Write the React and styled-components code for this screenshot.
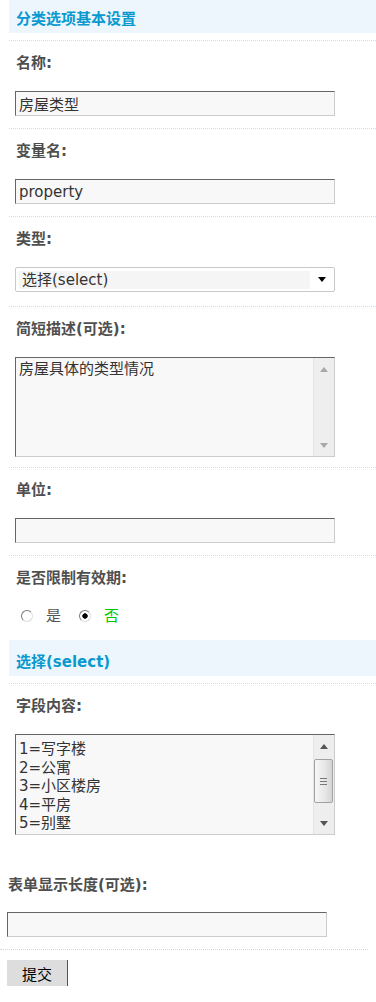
import React, { useState } from "react";
import styled, { createGlobalStyle } from "styled-components";

const GlobalStyle = createGlobalStyle`
  html, body {
    margin: 0;
    padding: 0;
    background: #fff;
  }
  body {
    font-family: "DejaVu Sans", "Noto Sans CJK SC", sans-serif;
    font-size: 15px;
    color: #333;
  }
`;

const FONT = `"DejaVu Sans", "Noto Sans CJK SC", sans-serif`;

const Page = styled.div`
  width: 376px;
  padding-bottom: 14px;
`;

const Form = styled.form`
  margin-left: 9px;
`;

const HeaderWrap = styled.div`
  padding-bottom: 7px;
  border-bottom: 1px dotted #c9dff0;
`;

const HeaderBar = styled.h3`
  margin: 0;
  padding: ${(p) => p.$top}px 7px 4px;
  background: #eef6fd;
  color: #0a99cf;
  font-size: 15px;
  font-weight: bold;
  line-height: 20px;
`;

const Row = styled.div`
  padding: 12px 6px ${(p) => (p.$pb != null ? p.$pb : 12)}px;
  border-bottom: ${(p) => (p.$noBorder ? "none" : "1px dotted #c9dff0")};
`;

const Label = styled.div`
  font-size: 15px;
  font-weight: bold;
  line-height: 20px;
  color: #4f4f4f;
  padding-left: 1px;
  margin-bottom: ${(p) => (p.$mb != null ? p.$mb : 18)}px;
`;

const TextInput = styled.input`
  display: block;
  box-sizing: border-box;
  width: 320px;
  height: 25px;
  margin: 0;
  padding: 0 3px;
  border: 1px solid;
  border-color: #666 #ccc #ccc #666;
  background: #f8f8f8;
  font-family: ${FONT};
  font-size: 15px;
  color: #333;
  outline: none;
`;

const SelectFrame = styled.div`
  box-sizing: border-box;
  width: 320px;
  height: 25px;
  display: flex;
  align-items: center;
  padding: 0 0 0 3px;
  border: 1px solid #c9c9c9;
  border-radius: 2px;
  background: #fff;
`;

const SelectValue = styled.select`
  appearance: none;
  -webkit-appearance: none;
  width: 291px;
  height: 18px;
  margin: 0;
  padding: 0 0 0 3px;
  border: none;
  border-radius: 0;
  background: #f5f5f5;
  font-family: ${FONT};
  font-size: 15px;
  line-height: 18px;
  color: #333;
  outline: none;
`;

const SelectArrow = styled.span`
  flex: 1;
  display: flex;
  justify-content: center;
  align-items: center;
`;

const TextFrame = styled.div`
  box-sizing: border-box;
  width: 320px;
  height: ${(p) => p.$h}px;
  display: flex;
  border: 1px solid;
  border-color: #666 #ccc #ccc #666;
  background: #f8f8f8;
`;

const TextArea = styled.textarea`
  flex: 1;
  margin: 0;
  padding: ${(p) => p.$pt}px 3px 0;
  border: none;
  background: transparent;
  resize: none;
  overflow: hidden;
  font-family: ${FONT};
  font-size: 15px;
  line-height: 18.5px;
  color: #333;
  outline: none;
`;

const ScrollTrack = styled.div`
  width: 20px;
  display: flex;
  flex-direction: column;
  background: #eeeeee;
  border-left: 1px solid #e4e4e4;
`;

const ArrowCell = styled.div`
  height: 22px;
  display: flex;
  justify-content: center;
  align-items: center;
`;

const Thumb = styled.div`
  box-sizing: border-box;
  height: 44px;
  margin: 2px 1px 0 0;
  border: 1px solid #a2a2a2;
  border-radius: 2px;
  background: linear-gradient(to right, #f6f6f6, #e6e6e6 60%, #d4d4d4);
  display: flex;
  flex-direction: column;
  justify-content: center;
  align-items: center;
  gap: 2px;
`;

const Grip = styled.span`
  display: block;
  width: 7px;
  height: 1px;
  background: #777;
`;

const Spacer = styled.div`
  flex: 1;
`;

const RadioGroup = styled.div`
  display: flex;
  align-items: center;
  height: 20px;
  margin-top: 3px;
  padding-left: 6px;
  gap: 18px;
`;

const RadioOption = styled.label`
  display: inline-flex;
  align-items: center;
  gap: 13px;
  font-size: 15px;
  line-height: 20px;
  color: ${(p) => (p.$active ? "#00c800" : "#555")};
`;

const Radio = styled.input`
  appearance: none;
  -webkit-appearance: none;
  box-sizing: border-box;
  width: 12px;
  height: 12px;
  margin: 0;
  border-radius: 50%;
  border: 1px solid;
  border-color: #7a7a7a #dddddd #dddddd #7a7a7a;
  background: #fff;
  &:checked {
    background: radial-gradient(circle, #000 0 2.4px, #fff 3px);
  }
`;

const Footer = styled.div`
  width: 368px;
  margin-top: 28px;
`;

const FooterField = styled.div`
  padding: 0 0 12px 7px;
  border-bottom: 1px dotted #d8d8d8;
`;

const SubmitButton = styled.button`
  display: block;
  width: 61px;
  height: 26px;
  margin: 10px 0 0 7px;
  padding: 0;
  border: none;
  border-right: 1px solid #555;
  background: #dddddd;
  font-family: ${FONT};
  font-size: 15px;
  color: #000;
`;

const Triangle = ({ up, color }) => (
  <svg width="8" height="5" viewBox="0 0 8 5">
    <polygon
      points={up ? "4,0 8,5 0,5" : "0,0 8,0 4,5"}
      fill={color}
    />
  </svg>
);

const FakeScroll = ({ active }) => {
  const color = active ? "#555" : "#a9a9a9";
  return (
    <ScrollTrack>
      <ArrowCell>
        <Triangle up color={color} />
      </ArrowCell>
      {active && (
        <Thumb>
          <Grip />
          <Grip />
          <Grip />
        </Thumb>
      )}
      <Spacer />
      <ArrowCell>
        <Triangle color={color} />
      </ArrowCell>
    </ScrollTrack>
  );
};

export default function App() {
  const [name, setName] = useState("房屋类型");
  const [variable, setVariable] = useState("property");
  const [type, setType] = useState("select");
  const [desc, setDesc] = useState("房屋具体的类型情况");
  const [unit, setUnit] = useState("");
  const [expire, setExpire] = useState("0");
  const [choices, setChoices] = useState(
    "1=写字楼\n2=公寓\n3=小区楼房\n4=平房\n5=别墅"
  );
  const [size, setSize] = useState("");

  return (
    <Page>
      <GlobalStyle />
      <Form onSubmit={(e) => e.preventDefault()}>
        <HeaderWrap>
          <HeaderBar $top={9}>分类选项基本设置</HeaderBar>
        </HeaderWrap>

        <Row>
          <Label>名称:</Label>
          <TextInput value={name} onChange={(e) => setName(e.target.value)} />
        </Row>

        <Row>
          <Label>变量名:</Label>
          <TextInput
            value={variable}
            onChange={(e) => setVariable(e.target.value)}
          />
        </Row>

        <Row $pb={14}>
          <Label>类型:</Label>
          <SelectFrame>
            <SelectValue value={type} onChange={(e) => setType(e.target.value)}>
              <option value="select">选择(select)</option>
              <option value="text">文本(text)</option>
              <option value="radio">单选(radio)</option>
            </SelectValue>
            <SelectArrow>
              <Triangle color="#000" />
            </SelectArrow>
          </SelectFrame>
        </Row>

        <Row $pb={10}>
          <Label>简短描述(可选):</Label>
          <TextFrame $h={100}>
            <TextArea
              $pt={2}
              value={desc}
              onChange={(e) => setDesc(e.target.value)}
            />
            <FakeScroll />
          </TextFrame>
        </Row>

        <Row>
          <Label>单位:</Label>
          <TextInput value={unit} onChange={(e) => setUnit(e.target.value)} />
        </Row>

        <Row $pb={14} $noBorder>
          <Label>是否限制有效期:</Label>
          <RadioGroup>
            <RadioOption $active={expire === "1"}>
              <Radio
                type="radio"
                name="expire"
                value="1"
                checked={expire === "1"}
                onChange={() => setExpire("1")}
              />
              是
            </RadioOption>
            <RadioOption $active={expire === "0"}>
              <Radio
                type="radio"
                name="expire"
                value="0"
                checked={expire === "0"}
                onChange={() => setExpire("0")}
              />
              否
            </RadioOption>
          </RadioGroup>
        </Row>

        <HeaderWrap>
          <HeaderBar $top={12}>选择(select)</HeaderBar>
        </HeaderWrap>

        <Row $noBorder>
          <Label>字段内容:</Label>
          <TextFrame $h={101}>
            <TextArea
              $pt={5}
              value={choices}
              onChange={(e) => setChoices(e.target.value)}
            />
            <FakeScroll active />
          </TextFrame>
        </Row>
      </Form>

      <Footer>
        <FooterField>
          <Label $mb={17}>表单显示长度(可选):</Label>
          <TextInput value={size} onChange={(e) => setSize(e.target.value)} />
        </FooterField>
        <SubmitButton type="submit">提交</SubmitButton>
      </Footer>
    </Page>
  );
}
